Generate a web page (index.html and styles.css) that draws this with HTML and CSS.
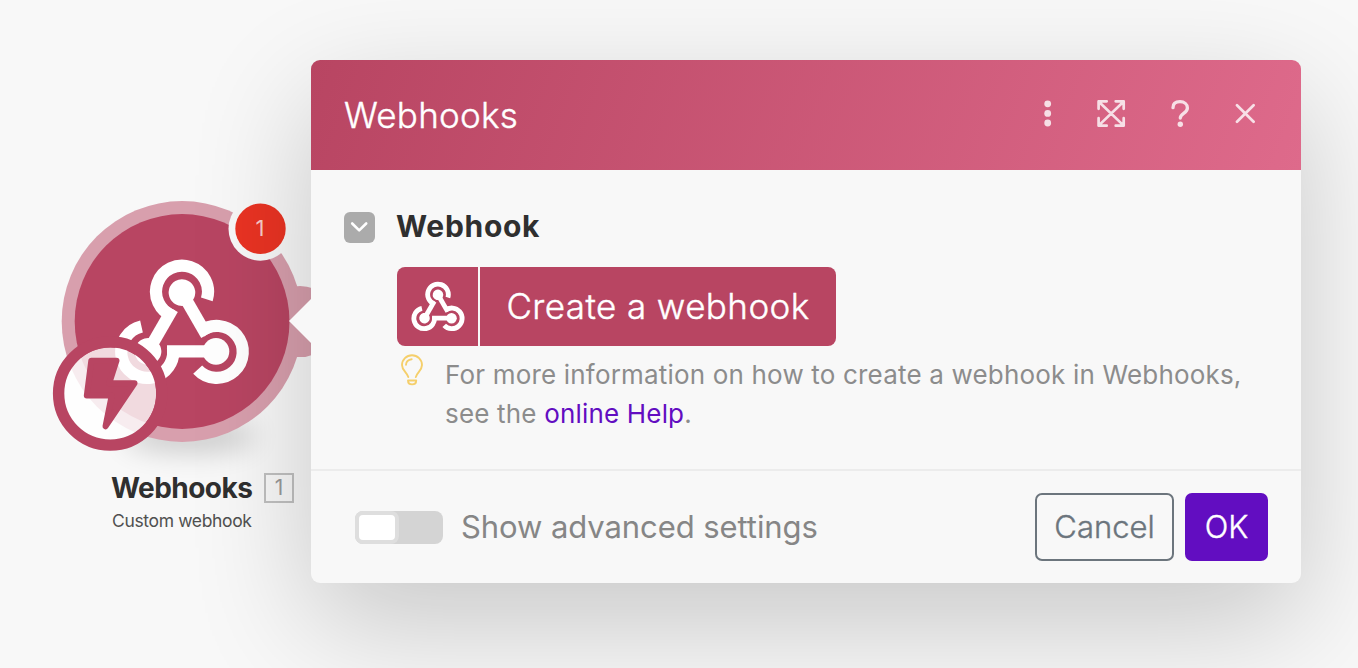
FILE: index.html
```html
<!DOCTYPE html>
<html lang="en">
<head>
<meta charset="utf-8">
<title>Webhooks</title>
<link rel="stylesheet" href="styles.css">
</head>
<body>
<svg class="defs" width="0" height="0" aria-hidden="true">
  <defs>
    <symbol id="hook" viewBox="114 258 136 128">
      <g fill="none" stroke="#fff" stroke-width="12.2">
        <g id="hook-arm">
          <path d="M172.9 347.6A26 26 0 1 1 141.5 326.5"/>
          <path d="M167 351.4H216.7"/>
          <circle cx="216" cy="351.4" r="13.3" fill="#fff" stroke="none"/>
        </g>
        <use href="#hook-arm" transform="rotate(120 182 331.8)"/>
        <use href="#hook-arm" transform="rotate(240 182 331.8)"/>
      </g>
    </symbol>
  </defs>
</svg>
<main class="canvas">
  <section class="module">
    <svg class="module-art" width="272" height="290" viewBox="40 180 272 290">
      <ellipse class="art-shadow" cx="190" cy="436" rx="66" ry="16"/>
      <circle cx="300" cy="321.5" r="35.6" fill="#d89fad"/>
      <circle cx="182.1" cy="321.5" r="120.4" fill="#d89fad"/>
      <circle cx="182.1" cy="321.5" r="107.4" fill="#b84562"/>
      <use href="#hook" x="114" y="258" width="136" height="128"/>
      <circle cx="110.2" cy="393.5" r="46" fill="#fff" fill-opacity=".8"/>
      <circle cx="110.2" cy="393.5" r="51.6" fill="none" stroke="#b84562" stroke-width="11.4"/>
      <path d="M91.3 360.7H116.5L109.2 383.3H134.5L105.5 426.3L111.7 395.6H86.8Z" fill="#b84562" stroke="#b84562" stroke-width="6" stroke-linejoin="round"/>
      <circle cx="260.5" cy="228.7" r="32" fill="#f8f8f8"/>
      <circle cx="260.5" cy="228.7" r="25.2" fill="#ea3323"/>
      <text class="badge-text" x="260" y="236.3" text-anchor="middle">1</text>
    </svg>
    <div class="module-label">
      <div>
        <div class="module-name">Webhooks</div>
        <div class="module-sub">Custom webhook</div>
      </div>
      <span class="module-index">1</span>
    </div>
  </section>

  <section class="dialog">
    <svg class="pointer" width="23" height="46" viewBox="0 0 23 46"><path d="M23 0L0 23L23 46Z" fill="#f8f8f8"/></svg>
    <header class="dialog-head">
      <h1 class="title">Webhooks</h1>
      <svg class="tools" width="220" height="40" viewBox="1040 93 220 40" fill="none" stroke="#fff" stroke-width="2.7" stroke-linecap="round" stroke-linejoin="round">
        <g fill="#fff" stroke="none"><circle cx="1047.7" cy="103.8" r="3.4"/><circle cx="1047.7" cy="113.4" r="3.4"/><circle cx="1047.7" cy="123" r="3.4"/></g>
        <path d="M1098.6 101.5L1123.7 125.6M1123.7 101.5L1098.6 125.6M1106.7 101.3H1098.6V108.8M1115.7 101.3H1123.7V108.8M1106.7 125.7H1098.6V118.2M1115.7 125.7H1123.7V118.2"/>
        <path d="M1173 107.7C1173 103.6 1176 101.7 1180 101.7C1184.3 101.7 1187.4 104.3 1187.4 108C1187.4 113.5 1180.3 113.2 1180.3 118" stroke-width="3.3"/>
        <circle cx="1180.3" cy="124.3" r="2.7" fill="#fff" stroke="none"/>
        <path d="M1237 105.3L1253.6 121.7M1253.6 105.3L1237 121.7"/>
      </svg>
    </header>
    <div class="dialog-body">
      <svg class="collapse" width="31" height="31" viewBox="0 0 31 31"><rect width="31" height="31" rx="6" fill="#ababab"/><path d="M8.2 11.5L15.2 18.4L22.2 11.5" fill="none" stroke="#fff" stroke-width="2.6" stroke-linecap="round" stroke-linejoin="round"/></svg>
      <div class="field">
        <h2 class="field-title">Webhook</h2>
        <button class="create" type="button">
          <span class="create-icon"><svg width="54" height="51"><use href="#hook" width="54" height="51"/></svg></span>
          <span class="create-text">Create a webhook</span>
        </button>
        <div class="hint">
          <svg class="bulb" width="24" height="34" viewBox="400 352.5 24 34" fill="none" stroke="#f5cf6b" stroke-width="1.9" stroke-linecap="round" stroke-linejoin="round">
            <path d="M408.3 376.6C407 371.6 402 370 402 364.5A10 9.8 0 0 1 422 364.5C422 370 417 371.6 415.8 376.6M406 364.3C406 361.4 408.3 359 411.7 358.7"/>
            <path d="M408 380H416.2C416.2 382.8 414.8 383.9 412.1 383.9C409.4 383.9 408 382.8 408 380Z"/>
          </svg>
          <p class="hint-text">For more information on how to create a webhook in Webhooks,<br>see the <a class="link">online Help</a>.</p>
        </div>
      </div>
    </div>
    <footer class="dialog-foot">
      <span class="switch"><span class="knob"></span></span>
      <span class="switch-label">Show advanced settings</span>
      <button class="btn cancel" type="button">Cancel</button>
      <button class="btn ok" type="button">OK</button>
    </footer>
  </section>
</main>
</body>
</html>
```
FILE: styles.css
```css
* { box-sizing: border-box; }
body { margin: 0; background: #f8f8f8; font-family: Inter, "Liberation Sans", sans-serif; }
h1, h2, p { margin: 0; }
button { border: 0; padding: 0; font-family: inherit; }
.defs { position: absolute; }
.canvas { position: relative; width: 1358px; height: 668px; overflow: hidden; }

.module { position: absolute; left: 40px; top: 180px; width: 272px; }
.module-art { display: block; overflow: visible; }
.art-shadow { fill: #000; opacity: .18; filter: blur(14px); }
.badge-text { font-size: 22px; font-weight: 400; fill: #fff; fill-opacity: .75; }
.module-label { display: flex; align-items: flex-start; gap: 12px; padding-left: 72px; white-space: nowrap; }
.module-name { width: 140px; font-size: 28px; font-weight: 700; line-height: 36px; letter-spacing: -.55px; margin-left: -1px; color: #2f2f2f; }
.module-sub { width: 140px; margin-top: 3px; font-size: 17.5px; line-height: 24px; letter-spacing: -.35px; color: #505050; }
.module-index { width: 30px; height: 30px; margin-top: 3px; border: 2px solid #c0c0c0; font-size: 21px; font-weight: 400; line-height: 26px; text-align: center; color: #999; }

.dialog { position: absolute; left: 311px; top: 60px; width: 990px; height: 523px; border-radius: 9px; background: #f8f8f8; box-shadow: 0 40px 120px rgba(0, 0, 0, .2); }
.pointer { position: absolute; left: -22px; top: 238px; }
.dialog-head { display: flex; align-items: center; justify-content: space-between; height: 110px; padding: 0 41px 0 33px; border-radius: 9px 9px 0 0; background: linear-gradient(110deg, #b84562, #de6a8b); }
.title { font-size: 35px; font-weight: 300; line-height: 44px; letter-spacing: .25px; -webkit-text-stroke: .4px #fff; color: #fff; }
.tools { opacity: .8; margin-top: -4px; }
.dialog-body { display: flex; gap: 22px; height: 299px; padding: 36px 33px 0; }
.collapse { flex: none; margin-top: 6px; }
.field-title { font-size: 30px; font-weight: 700; line-height: 40px; letter-spacing: .7px; margin-left: -1px; color: #2f2f2f; }
.create { display: flex; width: 439px; height: 79px; margin-top: 21px; border-radius: 8px; background: #b84562; overflow: hidden; }
.create-icon { display: flex; align-items: center; justify-content: center; width: 83px; height: 79px; border-right: 2px solid #f8f8f8; }
.create-text { flex: 1; font-size: 35px; font-weight: 300; line-height: 79px; letter-spacing: .42px; -webkit-text-stroke: .4px #fff; color: #fff; white-space: nowrap; }
.hint { display: flex; gap: 21px; padding: 7px 0 0 3px; }
.bulb { flex: none; }
.hint-text { padding-top: 2px; font-size: 26px; font-weight: 400; line-height: 39px; letter-spacing: .18px; color: #8c8c8c; white-space: nowrap; }
.link { color: #620dc1; }
.dialog-foot { display: flex; align-items: center; height: 114px; padding: 0 33px 0 44px; border-top: 2px solid #ececec; }
.switch { width: 88px; height: 33px; margin-top: 1px; border-radius: 8px; background: #d4d4d4; }
.knob { display: block; width: 44px; height: 33px; border: 4px solid #dedede; border-radius: 8px; background: #fff; }
.switch-label { margin: 0 auto 0 18px; font-size: 31px; font-weight: 400; letter-spacing: -.08px; line-height: 40px; color: #868686; white-space: nowrap; }
.btn { height: 68px; border-radius: 7px; font-size: 31px; font-weight: 300; line-height: 38px; -webkit-text-stroke: .4px currentColor; }
.cancel { width: 139px; margin-right: 11px; border: 2px solid #6c757d; background: transparent; color: #6c757d; }
.ok { width: 83px; background: #620dc1; color: #fff; }
```
